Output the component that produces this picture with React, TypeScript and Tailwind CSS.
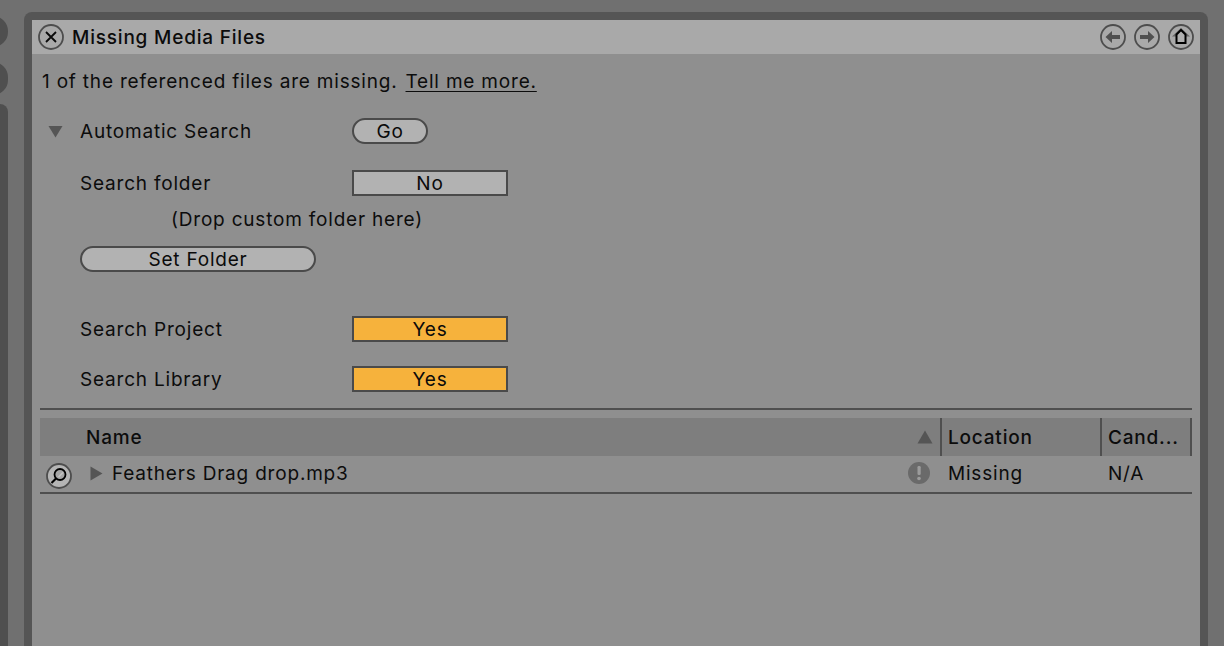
import React from "react";

const font = "font-['Inter','Noto_Sans',sans-serif]";

function RoundIcon({ children }: { children: React.ReactNode }) {
  return (
    <svg width="28" height="28" viewBox="0 0 28 28" className="block shrink-0">
      <circle cx="14" cy="14" r="12" fill="none" stroke="#4d4d4d" strokeWidth="1.8" />
      {children}
    </svg>
  );
}

function Toggle({ label, on }: { label: string; on?: boolean }) {
  return (
    <div
      className={`w-[156px] h-[26px] border-2 border-[#4a4a4a] flex items-center justify-center text-[19px] leading-none text-[#0a0a0a] ${
        on ? "bg-[#f6b23c]" : "bg-[#b2b2b2]"
      }`}
    >
      {label}
    </div>
  );
}

function Pill({ label, width }: { label: string; width: string }) {
  return (
    <div
      className={`${width} h-[26px] rounded-full border-2 border-[#4a4a4a] bg-[#b2b2b2] flex items-center justify-center text-[19px] leading-none text-[#0a0a0a]`}
    >
      {label}
    </div>
  );
}

export default function App() {
  return (
    <div className={`${font} w-[1224px] h-[646px] overflow-hidden bg-[#707070] flex text-[#0c0c0c] tracking-[0.8px]`}>
      <div className="w-[8px] shrink-0 overflow-hidden flex flex-col pt-[16px]">
        <div className="w-[30px] h-[31px] -ml-[22px] rounded-full bg-[#4f4f4f] shrink-0" />
        <div className="w-[30px] h-[33px] -ml-[22px] mt-[15px] rounded-full bg-[#4f4f4f] shrink-0" />
        <div className="w-[30px] flex-1 -ml-[22px] mt-[9px] rounded-tr-[8px] bg-[#4f4f4f]" />
      </div>

      <div className="ml-[16px] mt-[12px] w-[1184px] h-[646px] shrink-0 rounded-t-[8px] bg-[#555555] px-[8px] pt-[8px]">
        <div className="h-full bg-[#8f8f8f] flex flex-col">
          {/* Title bar */}
          <div className="h-[34px] shrink-0 bg-[#a9a9a9] flex items-center pl-[5px] pr-[5px]">
            <RoundIcon>
              <path d="M9 9 L19 19 M19 9 L9 19" stroke="#0a0a0a" strokeWidth="1.8" fill="none" />
            </RoundIcon>
            <span className="ml-[7px] text-[19px] font-medium leading-none">Missing Media Files</span>
            <div className="ml-auto flex gap-[6px]">
              <RoundIcon>
                <path d="M6.5 14 L13 8 V12 H21 V16 H13 V20 Z" fill="#505050" />
              </RoundIcon>
              <RoundIcon>
                <path d="M21.5 14 L15 8 V12 H7 V16 H15 V20 Z" fill="#505050" />
              </RoundIcon>
              <RoundIcon>
                <path d="M14 5 L23 13.5 H5 Z" fill="#666666" />
                <path d="M14 7 L18.5 11.5 V20 H9.5 V11.5 Z" fill="#b0b0b0" stroke="#000000" strokeWidth="2" />
              </RoundIcon>
            </div>
          </div>

          {/* Message */}
          <div className="h-[55px] shrink-0 flex items-center pl-[10px] pb-[1px] text-[19px] leading-none">
            <span>1 of the referenced files are missing.</span>
            <span className="ml-[8px] underline underline-offset-[3px]">Tell me more.</span>
          </div>

          {/* Automatic search */}
          <div className="flex items-center h-[26px] mt-[9px] text-[19px] leading-none">
            <svg width="16" height="13" viewBox="0 0 16 13" className="ml-[16px] shrink-0">
              <path d="M0.5 1 H14.5 L7.5 12.5 Z" fill="#555555" />
            </svg>
            <span className="ml-[16px] w-[272px]">Automatic Search</span>
            <Pill label="Go" width="w-[76px]" />
          </div>

          <div className="flex items-center h-[26px] mt-[26px] pl-[48px] text-[19px] leading-none">
            <span className="w-[272px]">Search folder</span>
            <Toggle label="No" />
          </div>

          <div className="h-[26px] mt-[10px] pl-[139px] flex items-center text-[19px] leading-none">
            (Drop custom folder here)
          </div>

          <div className="mt-[14px] pl-[48px]">
            <Pill label="Set Folder" width="w-[236px]" />
          </div>

          <div className="flex items-center h-[26px] mt-[44px] pl-[48px] text-[19px] leading-none">
            <span className="w-[272px]">Search Project</span>
            <Toggle label="Yes" on />
          </div>

          <div className="flex items-center h-[26px] mt-[24px] pl-[48px] text-[19px] leading-none">
            <span className="w-[272px]">Search Library</span>
            <Toggle label="Yes" on />
          </div>

          {/* Table */}
          <div className="mx-[8px] mt-[16px] border-t-2 border-[#4f4f4f]">
            <div className="mt-[8px] h-[38px] bg-[#7e7e7e] flex items-stretch text-[19px] font-medium leading-none">
              <div className="flex-1 flex items-center pl-[46px]">Name</div>
              <div className="w-[30px] flex items-center justify-start">
                <svg width="16" height="14" viewBox="0 0 16 14" className="ml-[7px]">
                  <path d="M8 0.5 L15.5 13.5 H0.5 Z" fill="#555555" />
                </svg>
              </div>
              <div className="w-[160px] border-l-2 border-[#4f4f4f] flex items-center pl-[6px]">Location</div>
              <div className="w-[92px] border-l-2 border-r-2 border-[#4f4f4f] flex items-center pl-[6px] whitespace-nowrap">Cand...</div>
            </div>

            <div className="h-[38px] pb-[2px] border-b-2 border-[#4f4f4f] flex items-center text-[19px] leading-none">
              <svg width="28" height="28" viewBox="0 0 28 28" className="ml-[5px] shrink-0 mt-[5px]">
                <circle cx="14" cy="14" r="12" fill="#b5b5b5" stroke="#4d4d4d" strokeWidth="1.8" />
                <circle cx="15" cy="12.5" r="5.5" fill="#a6a6a6" stroke="#000000" strokeWidth="1.8" />
                <path d="M11 16.5 L6.5 21" stroke="#000000" strokeWidth="2.2" />
                <path d="M13.5 15 L18 10.5" stroke="#c4c4c4" strokeWidth="1.4" />
              </svg>
              <svg width="13" height="15" viewBox="0 0 13 15" className="ml-[17px] shrink-0">
                <path d="M0.5 0.5 L12.5 7.5 L0.5 14.5 Z" fill="#555555" />
              </svg>
              <span className="ml-[9px]">Feathers Drag drop.mp3</span>
              <svg width="22" height="22" viewBox="0 0 22 22" className="ml-auto shrink-0 mr-[10px]">
                <circle cx="11" cy="11" r="11" fill="#6a6a6a" />
                <rect x="9.5" y="4" width="3.2" height="9" rx="1.2" fill="#9c9c9c" />
                <circle cx="11" cy="16.5" r="1.8" fill="#9c9c9c" />
              </svg>
              <span className="w-[160px] pl-[8px]">Missing</span>
              <span className="w-[92px] pl-[8px]">N/A</span>
            </div>
          </div>
        </div>
      </div>
    </div>
  );
}
